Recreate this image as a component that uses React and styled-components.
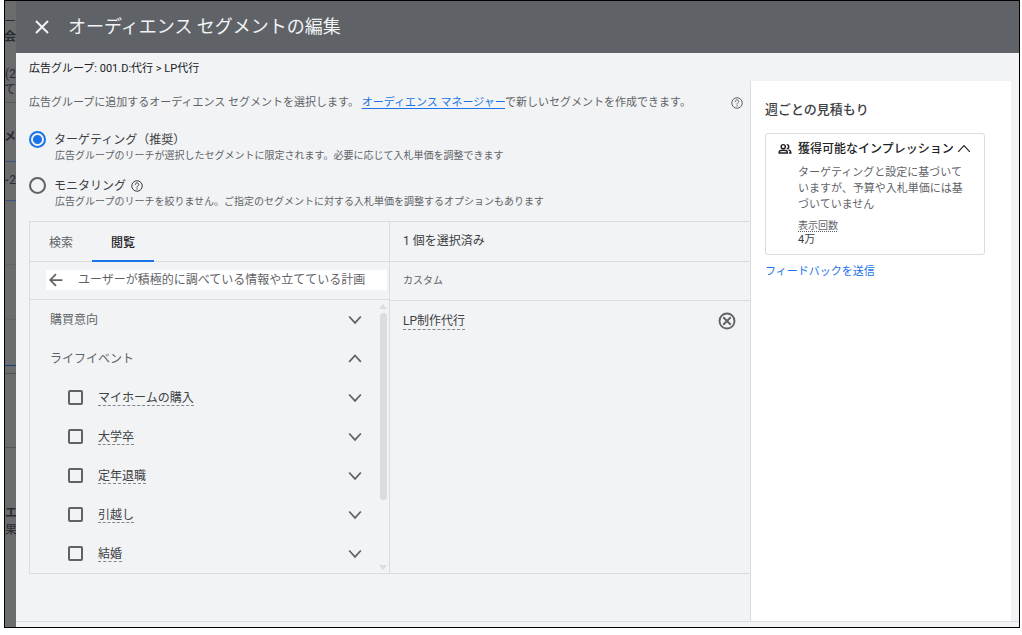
import * as React from 'react';
import styled, { createGlobalStyle } from 'styled-components';

const GlobalStyle = createGlobalStyle`
    * {
        box-sizing: border-box;
    }
    body {
        margin: 0;
        background: #fff;
        color: #3c4043;
        font-family: Roboto, "Noto Sans CJK JP", sans-serif;
        font-size: 12px;
        line-height: 16px;
    }
    button {
        padding: 0;
        border: 0;
        background: none;
        color: inherit;
        font: inherit;
        cursor: pointer;
    }
    svg {
        flex: none;
    }
`

const Frame = styled.div`
    display: grid;
    grid-template-columns: 11px minmax(0, 1fr);
    min-height: calc(100vh - 7px);
    margin: 0 2px 7px 4px;
    border: 1px solid #000;
`

const Backdrop = styled.div`
    display: flex;
    flex-direction: column;
    overflow: hidden;
    background: #6b6c6e;
    color: #2a2b2d;
    white-space: nowrap;
`

const BackdropBlock = styled.div`
    display: flex;
    flex: none;
    justify-content: ${p => p.$end ? 'flex-end' : 'flex-start'};
    height: ${p => p.$height}px;
    padding-top: ${p => p.$top || 0}px;
    border-bottom: 1px solid ${p => p.$line || 'transparent'};
    font-weight: ${p => p.$bold ? 700 : 400};
`

const Dialog = styled.main`
    display: flex;
    flex-direction: column;
    padding-bottom: 5px;
    background: #f1f3f4;
`

const Header = styled.header`
    display: flex;
    align-items: center;
    gap: 16px;
    height: 52px;
    padding: 0 16px;
    background: #5f6368;
    color: #f1f3f4;
`

const Title = styled.h1`
    margin: 0;
    font-size: 18px;
    font-weight: 400;
    line-height: 24px;
`

const IconButton = styled.button`
    display: flex;
    flex: none;
    align-items: center;
    justify-content: center;
    width: 20px;
    height: 20px;
`

const Breadcrumb = styled.div`
    padding: 8px 13px 4px;
    color: #202124;
    font-size: 11px;
`

const Body = styled.div`
    display: flex;
    flex: 1;
    padding-right: 8px;
    border-bottom: 1px solid #dadce0;
`

const Content = styled.section`
    flex: 1;
    min-width: 0;
    padding: 14px 0 40px 13px;
`

const Intro = styled.p`
    display: flex;
    align-items: center;
    justify-content: space-between;
    margin: 0;
    padding-right: 7px;
    color: #5f6368;
    font-size: 11px;
`

const Link = styled.a`
    color: #1a73e8;
    font-size: 11px;
    text-decoration: ${p => p.$underline ? 'underline' : 'none'};
    text-underline-offset: 2px;
`

const Options = styled.div`
    display: flex;
    flex-direction: column;
    gap: 13px;
    padding: 20px 0 11px;
`

const Option = styled.div`
    display: grid;
    grid-template-columns: 17px 1fr;
    column-gap: 8px;
`

const Radio = styled.input`
    appearance: none;
    width: 17px;
    height: 17px;
    margin: 0;
    border: 2px solid #5f6368;
    border-radius: 50%;

    &:checked {
        border-color: #1a73e8;
        background: radial-gradient(#1a73e8 0 4px, transparent 5px);
    }
`

const OptionLabel = styled.label`
    display: flex;
    align-items: center;
    gap: 5px;
`

const OptionHint = styled.div`
    grid-column: 2;
    padding-left: 1px;
    color: #5f6368;
    font-size: 10px;
`

const Picker = styled.div`
    display: grid;
    grid-template-columns: 359fr 361fr;
    border: 1px solid #dadce0;
    border-right: 0;
`

const Pane = styled.div`
    display: flex;
    flex-direction: column;
    min-width: 0;

    & + & {
        border-left: 1px solid #dadce0;
    }
`

const Tabs = styled.div`
    display: flex;
    height: 40px;
    border-bottom: 1px solid #dadce0;
`

const Tab = styled.button`
    width: 62px;
    height: 40px;
    padding-top: 4px;
    border-bottom: 2px solid ${p => p.$active ? '#1a73e8' : 'transparent'};
    color: ${p => p.$active ? '#202124' : '#5f6368'};
    font-weight: ${p => p.$active ? 500 : 400};
`

const BackRow = styled.div`
    height: 38px;
    padding: 8px 2px 0 16px;
    border-bottom: 1px solid #dadce0;
`

const BackBox = styled.div`
    display: flex;
    align-items: center;
    gap: 12px;
    height: 20px;
    background: #fff;
    color: #5f6368;
    white-space: nowrap;
`

const ListArea = styled.div`
    display: flex;
`

const List = styled.ul`
    flex: 1;
    margin: 0;
    padding: 0;
    list-style: none;
`

const Row = styled.li`
    display: flex;
    align-items: center;
    height: 39px;
    padding: 0 12px 0 ${p => p.$nested ? 38 : 20}px;
    color: #5f6368;
`

const RowLabel = styled.label`
    flex: 1;
`

const Checkbox = styled.input`
    appearance: none;
    width: 15px;
    height: 15px;
    margin: 0 15px 0 0;
    border: 2px solid #5f6368;
    border-radius: 2px;

    &:checked {
        background: #5f6368;
    }
`

const Term = styled.span`
    border-bottom: 1px dashed #80868b;
    color: #3c4043;
`

const ScrollBar = styled.div`
    display: flex;
    flex-direction: column;
    align-items: center;
    width: 12px;
    padding: 4px 0 3px;
`

const ScrollThumb = styled.div`
    width: 7px;
    height: 187px;
    margin: 4px 0 auto;
    border-radius: 4px;
    background: #dadce0;
`

const ScrollArrow = styled.div`
    border: 4px solid transparent;
    border-top-width: ${p => p.$up ? 0 : 5}px;
    border-bottom-width: ${p => p.$up ? 5 : 0}px;
    border-top-color: #dadce0;
    border-bottom-color: #dadce0;
`

const SelectedHead = styled.div`
    height: 40px;
    padding: 11px 13px 0;
    border-bottom: 1px solid #dadce0;
    color: #3c4043;
`

const SelectedGroup = styled.div`
    height: 39px;
    padding: 11px 13px 0;
    border-bottom: 1px solid #dadce0;
    color: #5f6368;
    font-size: 10px;
`

const SelectedItem = styled.div`
    display: flex;
    align-items: center;
    justify-content: space-between;
    height: 40px;
    padding: 0 13px;
    color: #5f6368;
`

const Sidebar = styled.aside`
    width: 261px;
    padding: 21px 26px 0 14px;
    border-left: 1px solid #dadce0;
    background: #fff;
`

const SideTitle = styled.h2`
    margin: 0 0 15px;
    color: #3c4043;
    font-size: 13px;
    font-weight: 500;
    line-height: 16px;
`

const Card = styled.div`
    margin-bottom: 8px;
    padding: 5px 10px 7px 12px;
    border: 1px solid #dadce0;
    border-radius: 3px;
`

const CardHead = styled.div`
    display: flex;
    align-items: center;
    color: #202124;
    font-weight: 500;
    white-space: nowrap;
`

const CardTitle = styled.span`
    flex: 1;
    padding-left: 6px;
`

const CardBody = styled.div`
    padding: 0 4px 0 20px;
    color: #5f6368;
    font-size: 11px;
`

const CardText = styled.p`
    margin: 6px 0;
`

const StatName = styled.div`
    font-size: 10px;
    line-height: 14px;
    text-decoration: underline dotted;
    text-underline-offset: 2px;
`

const StatValue = styled.div`
    color: #3c4043;
    line-height: 14px;
`

const Icon = ({ size = 16, width = 2, children }) => (
    <svg width={size} height={size} viewBox="0 0 24 24" fill="none" stroke="currentColor" strokeWidth={width} aria-hidden="true">
        {children}
    </svg>
)

const Chevron = ({ up, width = 3 }) => (
    <Icon size={14} width={width}>
        <path d={up ? 'M2 17 12 6l10 11' : 'M2 6l10 11L22 6'} />
    </Icon>
)

const HelpIcon = () => (
    <Icon size={12}>
        <circle cx="12" cy="12" r="10.5" />
        <path d="M8.5 9.5c0-5 7-4.5 7-.5 0 2.5-3.5 3-3.5 6M12 16.5v2.5" />
    </Icon>
)

const PeopleIcon = () => (
    <Icon size={14} width={2.5}>
        <circle cx="9" cy="8" r="3.5" />
        <path d="M2 19v-2c0-4 14-4 14 0v2zM15 4.5c4.500 0 4.500 7 0 7M18 13.5c3 .8 4 2 4 5.500h-3" />
    </Icon>
)

const events = ['マイホームの購入', '大学卒', '定年退職', '引越し', '結婚'];

const ExpandButton = ({ name, up }) => (
    <IconButton aria-label={name + (up ? 'を閉じる' : 'を開く')}>
        <Chevron up={up} />
    </IconButton>
)

const SegmentPicker = () => (
    <Picker>
        <Pane>
            <Tabs role="tablist">
                <Tab role="tab" aria-selected="false">検索</Tab>
                <Tab role="tab" aria-selected="true" $active>閲覧</Tab>
            </Tabs>
            <BackRow>
                <BackBox>
                    <IconButton aria-label="戻る">
                        <Icon size={14} width={3}><path d="M23 12H3M12 2 2 12l10 10" /></Icon>
                    </IconButton>
                    ユーザーが積極的に調べている情報や立てている計画
                </BackBox>
            </BackRow>
            <ListArea>
                <List>
                    <Row><RowLabel as="span">購買意向</RowLabel><ExpandButton name="購買意向" /></Row>
                    <Row><RowLabel as="span">ライフイベント</RowLabel><ExpandButton name="ライフイベント" up /></Row>
                    {events.map((name, i) => (
                        <Row key={name} $nested>
                            <Checkbox type="checkbox" id={`event-${i}`} />
                            <RowLabel htmlFor={`event-${i}`}><Term>{name}</Term></RowLabel>
                            <ExpandButton name={name} />
                        </Row>
                    ))}
                </List>
                <ScrollBar>
                    <ScrollArrow $up />
                    <ScrollThumb />
                    <ScrollArrow />
                </ScrollBar>
            </ListArea>
        </Pane>
        <Pane>
            <SelectedHead>1 個を選択済み</SelectedHead>
            <SelectedGroup>カスタム</SelectedGroup>
            <SelectedItem>
                <Term>LP制作代行</Term>
                <IconButton aria-label="LP制作代行を削除">
                    <Icon size={18} width={2.5}><circle cx="12" cy="12" r="10" /><path d="m7 7 10 10M17 7 7 17" /></Icon>
                </IconButton>
            </SelectedItem>
        </Pane>
    </Picker>
)

const App = () => {
    const [mode, setMode] = React.useState('targeting');

    return (
        <>
            <GlobalStyle />
            <Frame>
                <Backdrop aria-hidden="true">
                    <BackdropBlock $height={28} $top={13} $end>リー</BackdropBlock>
                    <BackdropBlock $height={37} $bold $end>式会</BackdropBlock>
                    <BackdropBlock $height={16}>(2</BackdropBlock>
                    <BackdropBlock $height={21} $line="#5a5b5d" $end>べて</BackdropBlock>
                    <BackdropBlock $height={59} $top={26} $line="#3b5480" $bold $end>メ</BackdropBlock>
                    <BackdropBlock $height={39} $top={10} $line="#3b5480" $end>~2</BackdropBlock>
                    <BackdropBlock $height={64} $line="#626365" />
                    <BackdropBlock $height={55} $line="#626365" />
                    <BackdropBlock $height={46} $line="#1c3d75" />
                    <BackdropBlock $height={8} $line="#505153" />
                    <BackdropBlock $height={74} $line="#555658" />
                    <BackdropBlock $height={74} $top={57} $bold>エ</BackdropBlock>
                    <BackdropBlock $height={20}>果の</BackdropBlock>
                </Backdrop>
                <Dialog>
                    <Header>
                        <IconButton aria-label="閉じる">
                            <Icon size={16} width={3}><path d="m3 3 18 18M21 3 3 21" /></Icon>
                        </IconButton>
                        <Title>オーディエンス セグメントの編集</Title>
                    </Header>
                    <Breadcrumb>広告グループ: 001.D:代行 &gt; LP代行</Breadcrumb>
                    <Body>
                        <Content>
                            <Intro>
                                <span>
                                    広告グループに追加するオーディエンス セグメントを選択します。{' '}
                                    <Link href="#manager" $underline>オーディエンス マネージャー</Link>
                                    で新しいセグメントを作成できます。
                                </span>
                                <HelpIcon />
                            </Intro>
                            <Options>
                                <Option>
                                    <Radio type="radio" name="mode" id="targeting" checked={mode === 'targeting'} onChange={() => setMode('targeting')} />
                                    <OptionLabel htmlFor="targeting">ターゲティング（推奨）</OptionLabel>
                                    <OptionHint>広告グループのリーチが選択したセグメントに限定されます。必要に応じて入札単価を調整できます</OptionHint>
                                </Option>
                                <Option>
                                    <Radio type="radio" name="mode" id="monitoring" checked={mode === 'monitoring'} onChange={() => setMode('monitoring')} />
                                    <OptionLabel htmlFor="monitoring">モニタリング <HelpIcon /></OptionLabel>
                                    <OptionHint>広告グループのリーチを絞りません。ご指定のセグメントに対する入札単価を調整するオプションもあります</OptionHint>
                                </Option>
                            </Options>
                            <SegmentPicker />
                        </Content>
                        <Sidebar>
                            <SideTitle>週ごとの見積もり</SideTitle>
                            <Card>
                                <CardHead>
                                    <PeopleIcon />
                                    <CardTitle>獲得可能なインプレッション</CardTitle>
                                    <IconButton aria-label="見積もりを閉じる">
                                        <Chevron up width={2} />
                                    </IconButton>
                                </CardHead>
                                <CardBody>
                                    <CardText>ターゲティングと設定に基づいていますが、予算や入札単価には基づいていません</CardText>
                                    <StatName>表示回数</StatName>
                                    <StatValue>4万</StatValue>
                                </CardBody>
                            </Card>
                            <Link href="#feedback">フィードバックを送信</Link>
                        </Sidebar>
                    </Body>
                </Dialog>
            </Frame>
        </>
    );
}

export default App;
